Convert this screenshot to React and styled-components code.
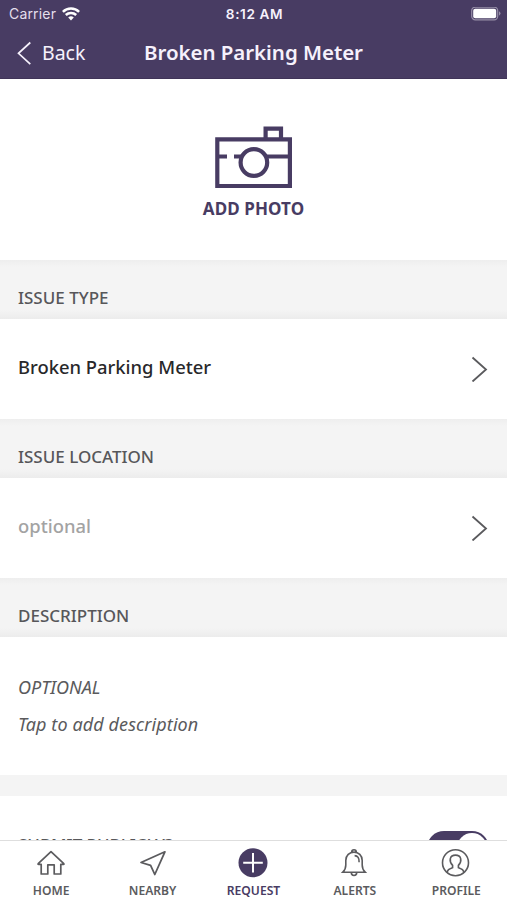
import React from "react";
import styled, { createGlobalStyle } from "styled-components";

const purple = "#483c63";

const GlobalStyle = createGlobalStyle`
  * { box-sizing: border-box; }
  body { margin: 0; background: #fff; font-family: "Noto Sans", "Open Sans", sans-serif; }
`;

const Screen = styled.div`
  width: 507px;
  height: 900px;
  display: flex;
  flex-direction: column;
  overflow: hidden;
  background: #fff;
`;

const Header = styled.header`
  flex: none;
  height: 79px;
  background: ${purple};
  color: #f6f1fc;
  border-bottom: 1px solid #403458;
`;

const HeaderGrid = styled.div`
  display: grid;
  grid-template-columns: 1fr auto 1fr;
  align-items: center;
`;

const StatusBar = styled(HeaderGrid)`
  height: 27px;
  padding: 0 6px 0 9px;
  font-family: Inter, sans-serif;
  font-size: 14px;
`;

const Carrier = styled.div`
  display: flex;
  align-items: center;
  gap: 6px;
  color: #e4dfec;
  letter-spacing: 0.18px;
`;

const Clock = styled.div`
  margin-left: -1px;
  font-size: 13.6px;
  font-weight: 600;
  letter-spacing: 0.6px;
`;

const BatteryIcon = styled.svg`
  justify-self: end;
`;

const NavBar = styled(HeaderGrid)`
  height: 51px;
  padding: 0 17px;
`;

const BackButton = styled.div`
  display: flex;
  align-items: center;
  gap: 10px;
  font-size: 19.5px;
  line-height: 26px;
`;

const Title = styled.h1`
  margin: 0 0 2px;
  font-size: 20.5px;
  font-weight: 600;
  line-height: 26px;
  letter-spacing: -0.05px;
`;

const Content = styled.main`
  flex: 1;
  min-height: 0;
  overflow: hidden;
`;

const PhotoArea = styled.section`
  height: 181px;
  padding-top: 47px;
  display: flex;
  flex-direction: column;
  align-items: center;
`;

const PhotoLabel = styled.div`
  margin-top: 8px;
  color: ${purple};
  font-size: 17px;
  font-weight: 700;
  line-height: 24px;
  letter-spacing: 0.1px;
`;

const SectionTitle = styled.h2`
  margin: 0;
  height: 59px;
  padding: 26px 18px 0;
  background: linear-gradient(#eeeeee, #f4f4f4 7px, #f4f4f4 50px, #ececec);
  color: #57575a;
  font-size: 17px;
  font-weight: 500;
  line-height: 24px;
`;

const Row = styled.div`
  height: 100px;
  padding: 0 19px 0 18px;
  display: flex;
  align-items: center;
  justify-content: space-between;
`;

const RowText = styled.span`
  margin-top: -4px;
  font-size: 18.4px;
  font-weight: 500;
  line-height: 24px;
  color: ${(p) => (p.$muted ? "#a3a3a3" : "#28282a")};
`;

const Description = styled.div`
  height: 138px;
  padding: 32px 18px 0;
  color: #5a5a5c;
  font-size: 18px;
  font-style: italic;
  line-height: 36.5px;
`;

const DescriptionLine = styled.div`
  letter-spacing: ${(p) => p.$spacing || "0"};
`;

const Divider = styled.div`
  height: 21px;
  background: #f4f4f4;
`;

const PublicRow = styled.div`
  height: 100px;
  padding: 35px 18px 0;
  display: flex;
  justify-content: space-between;
`;

const PublicLabel = styled.span`
  margin-top: 2px;
  color: #57575a;
  font-size: 17px;
  font-weight: 500;
  line-height: 24px;
`;

const Toggle = styled.div`
  width: 62px;
  height: 34px;
  padding: 2px;
  border-radius: 17px;
  display: flex;
  justify-content: flex-end;
  background: ${purple};
`;

const Knob = styled.div`
  width: 30px;
  height: 30px;
  border-radius: 50%;
  background: #fff;
`;

const TabBar = styled.nav`
  flex: none;
  height: 60px;
  display: grid;
  grid-template-columns: repeat(5, 1fr);
  border-top: 1px solid #dedede;
  background: #fff;
`;

const Tab = styled.div`
  display: flex;
  flex-direction: column;
  align-items: center;
  padding: 7px 0 0 ${(p) => p.$shift || 0}px;
  color: ${(p) => (p.$active ? purple : "#5b5b5e")};
`;

const TabLabel = styled.span`
  margin-top: 4px;
  font-size: 12.1px;
  font-weight: 600;
  line-height: 17px;
`;

const Line = ({ size = 30, width = 1.6, children }) => (
  <svg width={size} height={size} viewBox={`0 0 ${size} ${size}`} fill="none" stroke="currentColor" strokeWidth={width}>
    {children}
  </svg>
);

const Wifi = () => (
  <svg width="18" height="14" viewBox="0 0 18 14" fill="none" stroke="#fff" strokeWidth="2.5">
    <path d="M.9 4.8a11.6 11.6 0 0 1 16.2 0" />
    <path d="M3.8 8a7.5 7.5 0 0 1 10.4 0" />
    <path d="m9 13.5-2.8-2.9a4 4 0 0 1 5.6 0Z" fill="#fff" stroke="none" />
  </svg>
);

const Battery = () => (
  <BatteryIcon width="30" height="14" viewBox="0 0 30 14">
    <rect x=".7" y=".2" width="26" height="12.6" rx="3.6" fill="none" stroke="#978fa8" strokeWidth="1.2" />
    <rect x="2.2" y="1.7" width="23" height="9.6" rx="2" fill="#fff" />
    <path d="M28 4.3q3 2.2 0 4.4Z" fill="#978fa8" />
  </BatteryIcon>
);

const Camera = () => (
  <svg width="78" height="63" viewBox="0 0 78 63" fill="none" stroke={purple} strokeWidth="4.2">
    <path d="M2.3 13.4H74.9v46.6H2.3Z" />
    <path d="M50.6 13.4V2.7H66v10.7M3 30.5h9M19 30.5h8M52 30.5h22" />
    <circle cx="38.9" cy="36.5" r="13.3" />
  </svg>
);

const Chevron = () => (
  <svg width="17" height="26" viewBox="0 0 17 26" fill="none" stroke="#5a5a5d" strokeWidth="1.8">
    <path d="M1.5 1.5 15 13.5 1.5 25.5" />
  </svg>
);

const icons = {
  home: (
    <Line width={1.7}>
      <path d="M2.2 17V15.6L15 3.6l12.8 12V17M2.2 16.4H5.2V26H11.8V16.8h6.4V26h6.6V16.4h3" strokeLinejoin="round" />
    </Line>
  ),
  nearby: (
    <Line width={1.8}>
      <path d="M26.9 3.8 3 14.5l9.6 2.8 4.2 9.2Z" strokeLinejoin="round" />
    </Line>
  ),
  request: (
    <Line>
      <circle cx="15" cy="14.7" r="14.5" fill={purple} stroke="none" />
      <path d="M15 5v19.6M5.2 14.7h19.6" stroke="#fff" strokeWidth="2" />
    </Line>
  ),
  alerts: (
    <Line width={1.6}>
      <path d="M11.7 4a2.3 2.3 0 0 1 4.6 0M2.8 24.2c2.2-2.1 3-3.7 3-7.2v-4.6c0-5 3.7-8.3 8.2-8.3s8.2 3.3 8.2 8.3V17c0 3.5.8 5.1 3 7.2ZM11.3 24.6c0 3.9 5.4 3.9 5.4 0M14.6 7.6c3.2.1 4.7 2.5 4.5 6.6" />
    </Line>
  ),
  profile: (
    <Line width={1.6}>
      <circle cx="14.5" cy="14.7" r="13" />
      <path d="M6.2 24.7c.3-3 1.6-3.5 5.4-5.1v-2.2C7.6 13 8.6 7.1 14.5 7.1s6.9 5.9 2.9 10.3v2.2c3.8 1.6 5.1 2.1 5.4 5.1" />
    </Line>
  ),
};

const tabs = [
  { id: "home", label: "HOME", shift: 1 },
  { id: "nearby", label: "NEARBY", shift: 1 },
  { id: "request", label: "REQUEST", active: true },
  { id: "alerts", label: "ALERTS" },
  { id: "profile", label: "PROFILE" },
];

export default function App() {
  return (
    <Screen>
      <GlobalStyle />
      <Header>
        <StatusBar>
          <Carrier>
            Carrier <Wifi />
          </Carrier>
          <Clock>8:12 AM</Clock>
          <Battery />
        </StatusBar>
        <NavBar>
          <BackButton>
            <svg width="15" height="24" viewBox="0 0 15 24" fill="none" stroke="currentColor" strokeWidth="1.7">
              <path d="M13.3 1.5 1.5 12.3l11.8 10.8" />
            </svg>
            Back
          </BackButton>
          <Title>Broken Parking Meter</Title>
        </NavBar>
      </Header>
      <Content>
        <PhotoArea>
          <Camera />
          <PhotoLabel>ADD PHOTO</PhotoLabel>
        </PhotoArea>
        <SectionTitle>ISSUE TYPE</SectionTitle>
        <Row>
          <RowText>Broken Parking Meter</RowText>
          <Chevron />
        </Row>
        <SectionTitle>ISSUE LOCATION</SectionTitle>
        <Row>
          <RowText $muted>optional</RowText>
          <Chevron />
        </Row>
        <SectionTitle>DESCRIPTION</SectionTitle>
        <Description>
          <DescriptionLine>OPTIONAL</DescriptionLine>
          <DescriptionLine $spacing="0.1px">Tap to add description</DescriptionLine>
        </Description>
        <Divider />
        <PublicRow>
          <PublicLabel>SUBMIT PUBLICLY?</PublicLabel>
          <Toggle>
            <Knob />
          </Toggle>
        </PublicRow>
      </Content>
      <TabBar>
        {tabs.map((tab) => (
          <Tab key={tab.id} $active={tab.active} $shift={tab.shift}>
            {icons[tab.id]}
            <TabLabel>{tab.label}</TabLabel>
          </Tab>
        ))}
      </TabBar>
    </Screen>
  );
}
